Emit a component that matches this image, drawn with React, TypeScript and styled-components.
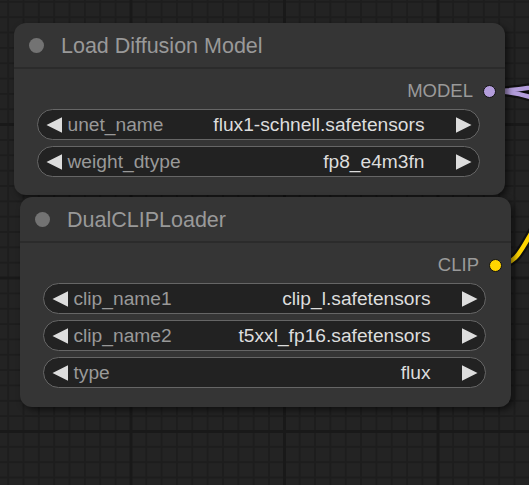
import React from "react";
import styled, { createGlobalStyle } from "styled-components";

const GlobalStyle = createGlobalStyle`
  html, body { margin: 0; padding: 0; background: #222222; }
  body { font-family: "Liberation Sans", Arial, sans-serif; }
`;

const Canvas = styled.div`
  position: relative;
  width: 529px;
  height: 485px;
  overflow: hidden;
  background-color: #232323;
  background-image:
    linear-gradient(to right, #191919 0, #191919 3px, transparent 3px),
    linear-gradient(to bottom, #191919 0, #191919 3px, transparent 3px),
    linear-gradient(to right, #1d1d1d 0, #1d1d1d 2px, transparent 2px),
    linear-gradient(to bottom, #1d1d1d 0, #1d1d1d 2px, transparent 2px);
  background-size: 153.5px 153.5px, 153.5px 153.5px, 15.35px 15.35px, 15.35px 15.35px;
  background-position: 129.5px 0, 0 123px, 7.2px 0, 0 0.9px;
`;

const Wires = styled.svg`
  position: absolute;
  left: 0;
  top: 0;
  width: 529px;
  height: 485px;
`;

const NodeBox = styled.div<{ $x: number; $y: number; $h: number }>`
  position: absolute;
  left: ${(p) => p.$x}px;
  top: ${(p) => p.$y}px;
  width: 491px;
  height: ${(p) => p.$h}px;
  box-sizing: border-box;
  display: flex;
  flex-direction: column;
  background: #353535;
  border-radius: 12px;
  box-shadow: 3px 3px 6px rgba(0, 0, 0, 0.55);
`;

const Title = styled.div`
  height: 46px;
  box-sizing: border-box;
  display: flex;
  align-items: center;
  padding: 2px 0 0 15px;
  border-bottom: 2px solid #2b2b2b;
  color: #999999;
  font-size: 21.5px;
  white-space: nowrap;
`;

const TitleDot = styled.span`
  width: 15px;
  height: 15px;
  border-radius: 50%;
  background: #737373;
  margin: -2px 17px 0 0;
  flex: none;
`;

const OutputRow = styled.div`
  height: 40px;
  box-sizing: border-box;
  padding: 4px 9px 0 0;
  display: flex;
  align-items: center;
  justify-content: flex-end;
  gap: 10px;
`;

const SlotLabel = styled.span`
  color: #9a9a9a;
  font-size: 18.5px;
  line-height: 36px;
`;

const SlotDot = styled.span<{ $color: string }>`
  width: 11px;
  height: 11px;
  border-radius: 50%;
  background: ${(p) => p.$color};
  border: 1.5px solid #111;
  flex: none;
`;

const WidgetList = styled.div`
  display: flex;
  flex-direction: column;
  gap: 6px;
  padding: 0 25px 0 23px;
`;

const Widget = styled.div`
  height: 31px;
  box-sizing: border-box;
  border: 1.5px solid #666666;
  border-radius: 16px;
  background: #222222;
  display: flex;
  align-items: center;
  padding: 0 7.5px;
  font-size: 19.2px;
  white-space: nowrap;
`;

const Arrow = styled.svg`
  width: 16px;
  height: 16px;
  flex: none;
`;

const Label = styled.span`
  color: #999999;
  margin-left: 6px;
  flex: 1;
`;

const Value = styled.span`
  color: #dddddd;
  margin-right: 31px;
`;

type W = { label: string; value: string };

function LeftArrow() {
  return (
    <Arrow viewBox="0 0 16 16">
      <polygon points="0.5,8 16,0.3 16,15.7" fill="#dddddd" />
    </Arrow>
  );
}

function RightArrow() {
  return (
    <Arrow viewBox="0 0 16 16">
      <polygon points="15.5,8 0,0.3 0,15.7" fill="#dddddd" />
    </Arrow>
  );
}

function ComboWidget({ w }: { w: W }) {
  return (
    <Widget>
      <LeftArrow />
      <Label>{w.label}</Label>
      <Value>{w.value}</Value>
      <RightArrow />
    </Widget>
  );
}

function GraphNode(props: {
  x: number;
  y: number;
  h: number;
  title: string;
  output: string;
  color: string;
  widgets: W[];
}) {
  return (
    <NodeBox $x={props.x} $y={props.y} $h={props.h}>
      <Title>
        <TitleDot />
        {props.title}
      </Title>
      <OutputRow>
        <SlotLabel>{props.output}</SlotLabel>
        <SlotDot $color={props.color} />
      </OutputRow>
      <WidgetList>
        {props.widgets.map((w) => (
          <ComboWidget key={w.label} w={w} />
        ))}
      </WidgetList>
    </NodeBox>
  );
}

export default function App() {
  return (
    <>
      <GlobalStyle />
      <Canvas>
        <Wires viewBox="0 0 529 485">
          <g fill="none" strokeLinecap="round">
            <path d="M489 91 C589 91 600 40 700 40" stroke="rgba(0,0,0,0.5)" strokeWidth="9" />
            <path d="M489 91 C589 91 600 180 700 180" stroke="rgba(0,0,0,0.5)" strokeWidth="9" />
            <path d="M489 91 C589 91 600 40 700 40" stroke="#b39ddb" strokeWidth="4.5" />
            <path d="M489 91 C589 91 600 180 700 180" stroke="#b39ddb" strokeWidth="4.5" />
            <path d="M495 265 C525 265 520 240 560 190" stroke="rgba(0,0,0,0.5)" strokeWidth="9" />
            <path d="M495 265 C525 265 520 240 560 190" stroke="#ffd500" strokeWidth="4.5" />
          </g>
        </Wires>
        <GraphNode
          x={14}
          y={23}
          h={172}
          title="Load Diffusion Model"
          output="MODEL"
          color="#b39ddb"
          widgets={[
            { label: "unet_name", value: "flux1-schnell.safetensors" },
            { label: "weight_dtype", value: "fp8_e4m3fn" },
          ]}
        />
        <GraphNode
          x={20}
          y={197}
          h={210}
          title="DualCLIPLoader"
          output="CLIP"
          color="#ffd500"
          widgets={[
            { label: "clip_name1", value: "clip_l.safetensors" },
            { label: "clip_name2", value: "t5xxl_fp16.safetensors" },
            { label: "type", value: "flux" },
          ]}
        />
      </Canvas>
    </>
  );
}
